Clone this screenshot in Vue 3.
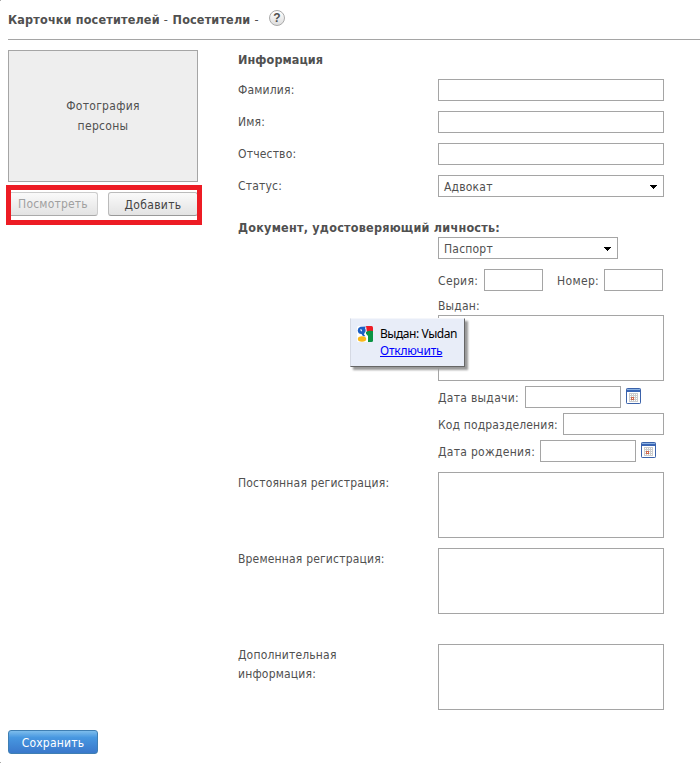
<script setup>
const names = ['Фамилия:', 'Имя:', 'Отчество:']
const dates = [
  { label: 'Дата выдачи:', cls: 'issued', cal: true },
  { label: 'Код подразделения:', cls: 'code', cal: false },
  { label: 'Дата рождения:', cls: 'birth', cal: true },
]
</script>

<template>
  <div class="page">
    <header class="head">
      <h1 class="title">Карточки посетителей <span class="dash">-</span> Посетители <span class="dash">-</span></h1>
      <span class="help">?</span>
    </header>
    <div class="body">
      <aside class="side">
        <div class="photo">Фотография<br />персоны</div>
        <div class="actions">
          <button class="btn off">Посмотреть</button>
          <button class="btn add">Добавить</button>
          <div class="frame"></div>
        </div>
      </aside>
      <main class="form">
        <h2 class="section">Информация</h2>
        <div v-for="n in names" :key="n" class="row">
          <label class="label">{{ n }}</label>
          <input class="box wide" />
        </div>
        <div class="row">
          <label class="label">Статус:</label>
          <div class="box wide select">Адвокат
            <svg class="arrow" width="7" height="4" viewBox="0 0 7 4" shape-rendering="crispEdges"><path d="M0 0h7v1H0zM1 1h5v1H1zM2 2h3v1H2zM3 3h1v1H3z" /></svg>
          </div>
        </div>
        <h2 class="section doc-title">Документ, удостоверяющий личность:</h2>
        <div class="doc">
          <div class="box select passport">Паспорт
            <svg class="arrow" width="7" height="4" viewBox="0 0 7 4" shape-rendering="crispEdges"><path d="M0 0h7v1H0zM1 1h5v1H1zM2 2h3v1H2zM3 3h1v1H3z" /></svg>
          </div>
          <div class="numbers">
            <label class="series">Серия:</label><input class="box short" />
            <label class="number">Номер:</label><input class="box short" />
          </div>
          <label class="by">Выдан:</label>
          <textarea class="box area"></textarea>
          <div v-for="d in dates" :key="d.label" class="line" :class="d.cls">
            <label class="tag">{{ d.label }}</label>
            <input class="box" />
            <svg v-if="d.cal" class="cal" width="15" height="16" viewBox="0 0 15 16">
              <rect x=".5" y=".5" width="14" height="15" rx=".7" fill="#fff" stroke="#3b62aa" />
              <path d="M1 1h13v3H1z" fill="#3b66b5" /><path d="M1 1h13v1H1z" fill="#8db4e4" />
              <path d="M3 5h9v9H3z" fill="#fff" />
              <path d="M3 5.500h9M3 7.500h9M3 9.500h9M3 11.500h9M3 13.500h9M3.500 5v9M5.500 5v9M7.500 5v9M9.500 5v9M11.500 5v9" stroke="#ccc" />
              <rect x="5.500" y="9.500" width="2" height="2" fill="#fff" stroke="#d2694c" />
            </svg>
          </div>
        </div>
        <div class="row memo">
          <label class="label">Постоянная регистрация:</label>
          <textarea class="box area"></textarea>
        </div>
        <div class="row memo">
          <label class="label">Временная регистрация:</label>
          <textarea class="box area"></textarea>
        </div>
        <div class="row memo extra">
          <label class="label">Дополнительная<br />информация:</label>
          <textarea class="box area"></textarea>
        </div>
      </main>
    </div>
    <button class="btn save">Сохранить</button>
    <div class="popup">
      <svg class="logo" width="16" height="16" viewBox="0 0 16 16">
        <path d="M9 0h5.500q1.500 0 1.500 1.500V6H10z" fill="#ee1c25" />
        <path d="M9 6q3-2 7-1v9.500q0 1.500-1.500 1.500H9z" fill="#0b9444" />
        <path d="M1.500 0H9v2L7.500 6 11 10v6H1.500Q0 16 0 14.500v-13Q0 0 1.500 0z" fill="#fff" />
        <path d="M3.500.7 9 .5 8 2q1.500 3-.5 5L7 8.500l1.500 1.800H6L4.500 8Q1 8 .7 4.500.800 1.500 3.500.7z" fill="#1c5fc4" />
        <ellipse cx="4.200" cy="4.200" rx=".6" ry="1.200" fill="#fff" transform="rotate(-25 4.200 4.200)" />
        <ellipse cx="5" cy="13" rx="4.200" ry="2.800" fill="#f9b81a" />
      </svg>
      <div><span class="hint">Выдан: Vыdan</span><br /><a class="link">Отключить</a></div>
    </div>
    <i class="corner top"></i>
    <i class="corner bottom"></i>
  </div>
</template>

<style>
body { margin: 0; background: #fff; }
</style>

<style scoped>
.page { position: relative; box-sizing: border-box; width: 700px; height: 763px; padding-left: 8px; overflow: hidden; color: #505050; font: 12px/19px "DejaVu Sans Condensed", "Noto Sans", sans-serif; letter-spacing: .18px; }
.head { display: flex; align-items: center; box-sizing: border-box; height: 40px; border-bottom: 1px solid #a5a5a5; }
.title { width: 261px; margin: 0; padding-bottom: 1px; font-size: 12.5px; line-height: 19px; letter-spacing: .17px; white-space: nowrap; }
.dash { font-weight: normal; letter-spacing: .6px; }
.help { box-sizing: border-box; width: 16px; height: 16px; border: 1px solid #aaa; border-radius: 50%; background: linear-gradient(#fff, #ddd); font: bold 12px/14px "Liberation Sans", sans-serif; letter-spacing: 0; text-align: center; margin-bottom: 3px; }
.body { display: flex; gap: 40px; height: 680px; padding-top: 10px; box-sizing: border-box; }
.side { width: 190px; }
.photo { display: flex; align-items: center; justify-content: center; box-sizing: border-box; height: 132px; border: 1px solid #a5a5a5; background: #eee; text-align: center; line-height: 20px; letter-spacing: .3px; }
.actions { position: relative; display: flex; justify-content: space-between; margin-top: 10px; }
.frame { position: absolute; left: -2px; top: -7px; box-sizing: border-box; width: 196px; height: 40px; border: 5px solid #ed1c24; }
.btn { box-sizing: border-box; width: 90px; height: 24px; padding: 0; border: 1px solid #bbb; border-bottom-color: #999; border-radius: 3px; background: linear-gradient(#fafafa, #e3e3e3); color: #444; font: inherit; line-height: 22px; letter-spacing: .2px; }
.off { color: #a0a0a0; border-color: #ccc; border-bottom-color: #aaa; }
.add { padding-top: 1px; letter-spacing: .35px; }
.section { margin: 0; box-sizing: border-box; height: 29px; font-size: 12.5px; line-height: 19px; letter-spacing: .08px; white-space: nowrap; }
.row { display: grid; grid-template-columns: 200px 226px; height: 32px; }
.label { padding-top: 1px; line-height: 20px; white-space: nowrap; }
.box { box-sizing: border-box; height: 22px; margin: 0; padding: 0; border: 1px solid #a5a5a5; border-radius: 0; background: #fff; resize: none; display: block; outline: none; }
.wide { width: 226px; }
.select { display: flex; align-items: center; justify-content: space-between; padding: 2px 6px 0 5px; letter-spacing: .2px; }
.arrow { margin-bottom: 1px; }
.doc-title { height: 19px; margin-top: 11px; letter-spacing: .23px; }
.doc { margin-left: 200px; height: 235px; width: 226px; }
.passport { width: 180px; }
.numbers { display: flex; margin-top: 10px; line-height: 24px; height: 22px; letter-spacing: .35px; }
.series { width: 46px; }
.number { width: 47px; margin-left: 14px; }
.short { width: 59px; }
.by { display: block; height: 24px; line-height: 31px; }
.area { width: 226px; height: 66px; }
.line { display: flex; height: 22px; margin-top: 5px; white-space: nowrap; line-height: 24px; letter-spacing: .3px; }
.tag { flex: none; }
.cal { margin: 2px 0 0 5px; }
.issued .tag { width: 87px; }
.issued .box, .birth .box { width: 96px; }
.code .tag { width: 125px; letter-spacing: .14px; }
.code .box { width: 101px; }
.birth .tag { width: 102px; }
.memo { height: 76px; }
.extra { margin-top: 20px; }
.extra .label { line-height: 19px; padding-top: 2px; }
.save { display: block; margin-top: 10px; padding-top: 1px; border-color: #3f7fb3; background: linear-gradient(#7dbdec, #4797e0 30%, #3a78cb); color: #fff; }
.popup { position: absolute; left: 350px; top: 318px; box-sizing: border-box; display: flex; gap: 7px; width: 115px; height: 49px; padding: 7px 0 0 6px; background: #e8edf8; border: 1px solid #f4f6fb; border-left-color: #d5d9e3; border-right: 1px solid #666; border-bottom: 1px solid #666; box-shadow: 3px 3px 2px #999; color: #000; font: 12px/17px "Noto Sans", sans-serif; white-space: nowrap; }
.popup > div { margin-top: -1px; }
.hint { letter-spacing: -.45px; }
.link { color: #00f; letter-spacing: -.2px; text-decoration: underline; }
.corner { position: absolute; left: 0; width: 1px; height: 1px; background: #aaa; }
.top { top: 0; }
.bottom { bottom: 0; }
</style>
